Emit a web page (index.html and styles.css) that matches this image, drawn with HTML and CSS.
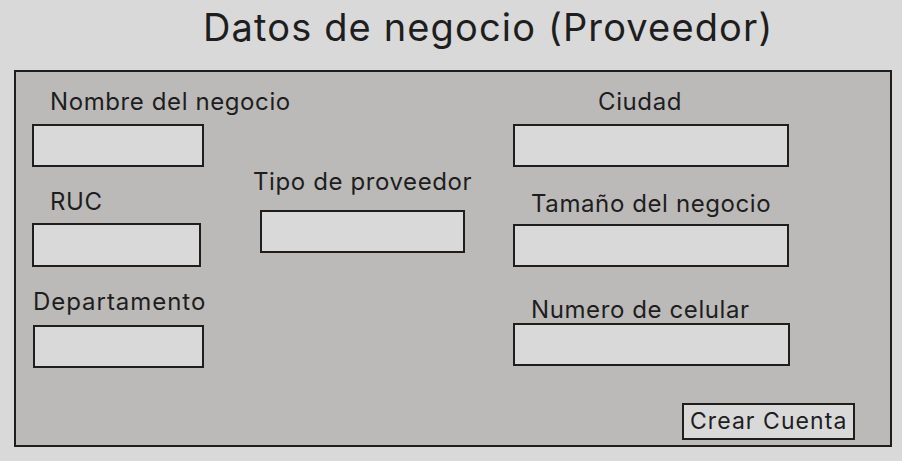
FILE: index.html
```html
<!DOCTYPE html>
<html lang="es">
<head>
<meta charset="utf-8">
<title>Datos de negocio (Proveedor)</title>
<link rel="stylesheet" href="styles.css">
</head>
<body>
<h1 class="title">Datos de negocio (Proveedor)</h1>
<form class="panel">
  <div class="grid">
    <div class="col col-1">
      <label class="field f-nombre"><span class="lbl">Nombre del negocio</span><span class="inp w172"></span></label>
      <label class="field f-ruc"><span class="lbl">RUC</span><span class="inp w169"></span></label>
      <label class="field f-depto"><span class="lbl lbl-flush">Departamento</span><span class="inp w171"></span></label>
    </div>
    <div class="col col-2">
      <label class="field f-tipo"><span class="lbl lbl-tipo">Tipo de proveedor</span><span class="inp w205"></span></label>
    </div>
    <div class="col col-3">
      <label class="field f-ciudad"><span class="lbl lbl-ciudad">Ciudad</span><span class="inp w276"></span></label>
      <label class="field f-tam"><span class="lbl">Tamaño del negocio</span><span class="inp w276"></span></label>
      <label class="field f-num"><span class="lbl">Numero de celular</span><span class="inp w277"></span></label>
    </div>
  </div>
  <div class="actions">
    <button type="button" class="btn">Crear Cuenta</button>
  </div>
</form>
</body>
</html>
```
FILE: styles.css
```css
* { box-sizing: border-box; }
html, body { margin: 0; padding: 0; }
body {
  width: 902px;
  height: 461px;
  background: #d9d9d9;
  font-family: Inter, "Noto Sans", sans-serif;
  color: #1e1e1e;
  overflow: hidden;
}
.title {
  margin: 0;
  padding: 9px 0 0 203px;
  height: 70px;
  font-size: 38px;
  font-weight: 400;
  letter-spacing: 0.03em;
  line-height: 37px;
  white-space: nowrap;
}
.panel {
  margin-left: 14px;
  width: 878px;
  height: 377px;
  background: #bbbab8;
  border: 2px solid #1e1e1e;
  display: flex;
  flex-direction: column;
}
.grid {
  display: grid;
  grid-template-columns: 221px 260px 1fr;
  padding: 15px 0 0 16px;
}
.col { display: flex; flex-direction: column; }
.field { display: flex; flex-direction: column; }
.lbl {
  display: block;
  font-size: 24px;
  letter-spacing: 0.025em;
  line-height: 30px;
  height: 28px;
  padding-left: 18px;
  white-space: nowrap;
}
.lbl-flush { padding-left: 1px; letter-spacing: 0.04em; }
.inp {
  display: block;
  height: 43px;
  background: #d9d9d9;
  border: 2px solid #1e1e1e;
}
.w172 { width: 172px; }
.w169 { width: 169px; }
.w171 { width: 171px; margin-left: 1px; }
.w205 { width: 205px; margin-left: 7px; }
.w276 { width: 276px; }
.w277 { width: 277px; }

.f-nombre .inp { margin-top: 9px; }
.f-ruc { margin-top: 20px; }
.f-ruc .inp { margin-top: 8px; height: 44px; }
.f-depto { margin-top: 20px; }
.f-depto .inp { margin-top: 10px; }

.col-2 { margin-top: 80px; }
.lbl-tipo { padding-left: 0; }
.f-tipo .inp { margin-top: 15px; }

.lbl-ciudad { padding-left: 85px; }
.f-ciudad .inp { margin-top: 9px; }
.f-tam { margin-top: 22px; }
.f-tam .inp { margin-top: 7px; }
.f-num { margin-top: 28px; }
.f-num .inp { margin-top: 0; }

.actions {
  display: flex;
  justify-content: flex-end;
  padding: 0 35px 0 0;
  margin-top: 35px;
}
.btn {
  margin: 0;
  width: 173px;
  height: 37px;
  padding: 0 0 0 6px;
  text-align: left;
  background: #d9d9d9;
  border: 2px solid #1e1e1e;
  border-radius: 0;
  font-family: inherit;
  font-size: 23px;
  letter-spacing: 0.046em;
  line-height: 33px;
  color: #1e1e1e;
}
```
